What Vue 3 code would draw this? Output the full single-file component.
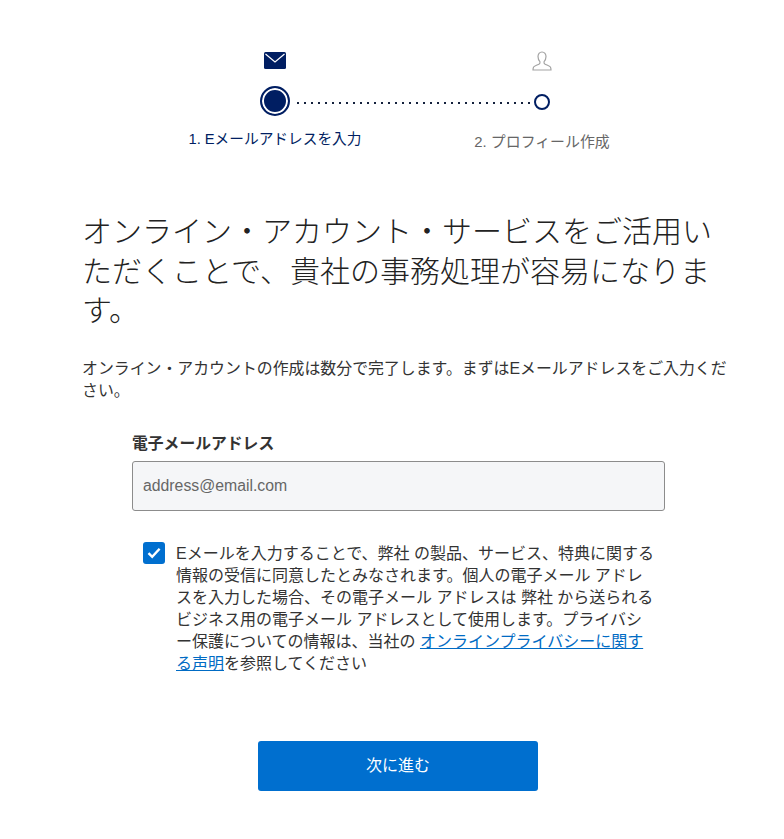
<template>
  <main class="page">
    <div class="steps">
      <div class="step step-one">
        <svg class="mail" width="22" height="17" viewBox="0 0 22 17">
          <rect width="22" height="17" rx="1.5" fill="#001e62" />
          <path d="M1.5 2 L11 10 L20.5 2" fill="none" stroke="#fff" stroke-width="1.2" />
        </svg>
        <span class="dot-big"></span>
        <span class="step-label active">1. Eメールアドレスを入力</span>
      </div>
      <span class="dots"></span>
      <div class="step step-two">
        <svg class="user" width="20" height="20" viewBox="0 0 20 20">
          <path
            d="M10 1 C7.4 1 6 3 6 5.6 C6 8 6.9 9.6 7.9 10.6 C8.2 11.6 8 12.4 7.2 13 C5.6 14 2.6 14.6 1.6 16 C1.2 16.7 1 17.6 1 19 L19 19 C19 17.6 18.8 16.7 18.4 16 C17.4 14.6 14.4 14 12.8 13 C12 12.4 11.8 11.6 12.1 10.6 C13.1 9.6 14 8 14 5.6 C14 3 12.6 1 10 1 Z"
            fill="none"
            stroke="#a3a3a3"
            stroke-width="1.2"
          />
        </svg>
        <span class="dot-small"></span>
        <span class="step-label">2. プロフィール作成</span>
      </div>
    </div>

    <h1>オンライン・アカウント・サービスをご活用いただくことで、貴社の事務処理が容易になります。</h1>
    <p class="lead">オンライン・アカウントの作成は数分で完了します。まずはEメールアドレスをご入力ください。</p>

    <form class="form" @submit.prevent>
      <label class="field-label" for="email">電子メールアドレス</label>
      <input id="email" v-model="email" class="field" type="email" placeholder="address@email.com" />

      <div class="consent">
        <button
          type="button"
          class="check"
          :aria-pressed="agreed"
          aria-label="同意"
          @click="agreed = !agreed"
        >
          <svg v-if="agreed" width="14" height="12" viewBox="0 0 14 12">
            <path d="M1.5 6.2 L5.2 9.8 L12.6 1.8" fill="none" stroke="#fff" stroke-width="2.4" />
          </svg>
        </button>
        <p>Eメールを入力することで、弊社 の製品、サービス、特典に関する情報の受信に同意したとみなされます。個人の電子メール アドレスを入力した場合、その電子メール アドレスは 弊社 から送られるビジネス用の電子メール アドレスとして使用します。プライバシー保護についての情報は、当社の <a href="#" @click.prevent>オンラインプライバシーに関する声明</a>を参照してください</p>
      </div>

      <div class="actions">
        <button type="submit" class="next">次に進む</button>
      </div>
    </form>
  </main>
</template>

<script setup>
import { ref } from "vue";

const email = ref("");
const agreed = ref(true);
</script>

<style>
body {
  background: #fff;
}
</style>

<style scoped>
.page {
  width: 784px;
  height: 839px;
  box-sizing: border-box;
  padding: 51px 50px 0 82px;
  overflow: hidden;
  font-family: "Liberation Sans", "Noto Sans CJK JP", sans-serif;
  color: #333;
}

.steps {
  display: flex;
  align-items: flex-start;
  height: 104px;
  margin-left: 106px;
}

.step {
  display: flex;
  flex-direction: column;
  align-items: center;
  width: 174px;
}

.step-one {
  margin-right: -66px;
}

.step-two {
  width: 136px;
  margin-left: -58px;
}

.mail {
  margin-top: 1px;
}

.user {
  margin-top: 0;
}

.dot-big {
  box-sizing: border-box;
  width: 30px;
  height: 30px;
  margin-top: 17px;
  border: 2px solid #001e62;
  border-radius: 50%;
  background: #001e62;
  box-shadow: inset 0 0 0 2px #fff;
}

.dot-small {
  box-sizing: border-box;
  width: 16px;
  height: 16px;
  margin-top: 23px;
  border: 2px solid #001e62;
  border-radius: 50%;
}

.step-label {
  margin-top: 13px;
  font-size: 14.7px;
  line-height: 20px;
  white-space: nowrap;
  color: #666;
}

.step-label.active {
  color: #001e62;
}

.step-two .step-label {
  margin-top: 22px;
  font-size: 14.9px;
}

.dots {
  width: 233px;
  height: 2px;
  margin: 51px 2px 0 1px;
  background: linear-gradient(90deg, #14213d 2px, transparent 2px) 0 0 / 7px 2px repeat-x;
}

h1 {
  margin: 57px 0 0;
  font-size: 30px;
  line-height: 39.5px;
  font-weight: 300;
  color: #222;
}

.lead {
  margin: 27px 0 0;
  font-size: 15.9px;
  line-height: 22.5px;
}

.form {
  width: 533px;
  margin: 30px 0 0 50px;
}

.field-label {
  display: block;
  font-size: 15.8px;
  line-height: 22px;
  font-weight: 700;
}

.field {
  display: block;
  box-sizing: border-box;
  width: 100%;
  height: 50px;
  margin-top: 6px;
  padding: 1px 10px 0;
  border: 1px solid #8c8c8c;
  border-radius: 3px;
  background: #f5f6f8;
  font: inherit;
  font-size: 15.8px;
  color: #333;
}

.field::placeholder {
  color: #666;
  opacity: 1;
}

.consent {
  display: flex;
  margin: 31px 0 0 11px;
}

.check {
  display: flex;
  flex: none;
  align-items: center;
  justify-content: center;
  width: 22px;
  height: 22px;
  padding: 0;
  border: 0;
  border-radius: 3px;
  background: #006fcf;
}

.consent p {
  width: 478px;
  margin: 1px 0 0 11px;
  font-size: 16px;
  line-height: 22px;
}

.consent a {
  color: #006bc4;
  text-decoration: underline;
}

.actions {
  display: flex;
  margin-top: 66px;
  padding-left: 126px;
}

.next {
  width: 280px;
  height: 50px;
  padding: 0 0 3px;
  border: 0;
  border-radius: 3px;
  background: #006fcf;
  color: #fff;
  font: inherit;
  font-size: 16px;
}
</style>
